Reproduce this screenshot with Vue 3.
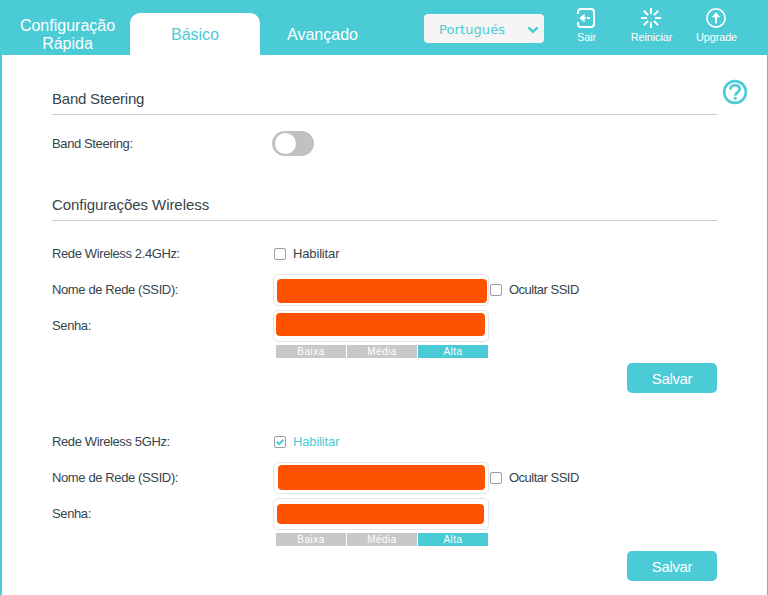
<script setup>
import { ref } from 'vue'

const language = ref('Portugués')
const bandSteering = ref(false)
const levels = ['Baixa', 'Média', 'Alta']
const networks = ref([
  { id: 'w24', label: 'Rede Wireless 2.4GHz:', enabled: false, hidden: false },
  { id: 'w5', label: 'Rede Wireless 5GHz:', enabled: true, hidden: false },
])
</script>

<template>
  <div class="page">
    <header class="header">
      <nav class="tabs">
        <a class="tab quick">Configuração<br />Rápida</a>
        <a class="tab active">Básico</a>
        <a class="tab">Avançado</a>
      </nav>
      <button class="language">
        <span>{{ language }}</span>
        <svg width="12" height="8" viewBox="0 0 12 8"><path d="M1.3 1.3 6 5.8l4.7-4.5" fill="none" stroke="#4acbd6" stroke-width="2.4" /></svg>
      </button>
      <div class="actions">
        <a class="action">
          <svg width="20" height="20" viewBox="0 0 20 20" fill="none" stroke="#fff" stroke-width="2">
            <path d="M2 6V4.2Q2 1 5 1h10q3 0 3 3v12q0 3-3 3H5q-3 0-3-3v-2" />
            <path d="M6 10h4M11 10h3" />
            <path d="M8.6 5.8 3.2 10l5.4 4.2z" fill="#fff" stroke="none" />
          </svg>
          <span>Sair</span>
        </a>
        <a class="action">
          <svg width="20" height="20" viewBox="0 0 20 20" fill="none" stroke="#fff" stroke-width="2">
            <path d="M10 0v6M10 14v6M0 10h6M14 10h6M2.8 2.8l4.3 4.3M12.9 12.9l4.3 4.3M17.2 2.8l-4.3 4.3M7.1 12.9l-4.3 4.3" />
          </svg>
          <span>Reiniciar</span>
        </a>
        <a class="action">
          <svg width="20" height="20" viewBox="0 0 20 20" fill="none" stroke="#fff">
            <circle cx="10" cy="10" r="9.1" stroke-width="1.6" />
            <path d="M10 8v7.5" stroke-width="2" />
            <path d="M10 4.3 14.3 9.3H5.7z" fill="#fff" stroke="none" />
          </svg>
          <span>Upgrade</span>
        </a>
      </div>
    </header>

    <main class="body">
      <div class="content">
        <h2>Band Steering</h2>
        <div class="row steering">
          <span class="label">Band Steering:</span>
          <button class="switch" :class="{ on: bandSteering }" @click="bandSteering = !bandSteering"><i></i></button>
        </div>

        <h2 class="second">Configurações Wireless</h2>
        <section v-for="net in networks" :key="net.id" class="network" :class="net.id">
          <div class="row">
            <span class="label">{{ net.label }}</span>
            <span class="check" :class="{ checked: net.enabled }" @click="net.enabled = !net.enabled">
              <i><svg v-if="net.enabled" width="10" height="10" viewBox="0 0 10 10"><path d="M1.7 4.8 4.2 7 8.4 2.7" fill="none" stroke="#4acbd6" stroke-width="2" /></svg></i>
              <span>Habilitar</span>
            </span>
          </div>
          <div class="row">
            <span class="label">Nome de Rede (SSID):</span>
            <div class="field ssid"><div class="mask"></div></div>
            <span class="check hide" @click="net.hidden = !net.hidden"><i></i><span>Ocultar SSID</span></span>
          </div>
          <div class="row">
            <span class="label">Senha:</span>
            <div class="field password"><div class="mask"></div></div>
          </div>
          <div class="strength">
            <span v-for="level in levels" :key="level" :class="{ current: level === 'Alta' }">{{ level }}</span>
          </div>
          <button class="save">Salvar</button>
        </section>
      </div>
      <button class="help">
        <svg width="26" height="26" viewBox="0 0 26 26" fill="none" stroke="#4acbd6">
          <circle cx="13" cy="13" r="10.9" stroke-width="2.6" />
          <path d="M8.4 10.8C8.4 7.7 10.2 6.3 13 6.3s4.7 1.5 4.7 4c0 3.1-4.5 3.1-4.5 6.4" stroke-width="2.6" />
          <path d="M11.8 18h2.8v2.6h-2.8z" fill="#4acbd6" stroke="none" />
        </svg>
      </button>
    </main>
  </div>
</template>

<style>
body { margin: 0; background: #fff; overflow: hidden; }
</style>

<style scoped>
* { box-sizing: border-box; }
button { border: 0; padding: 0; margin: 0; font-family: inherit; }
svg { display: block; }
.page { width: 768px; height: 595px; display: flex; flex-direction: column; font-family: "Liberation Sans", Arial, sans-serif; font-size: 13px; color: #36444b; }
.header { height: 55px; flex: none; background: #4acbd6; display: flex; align-items: flex-start; color: #fff; }
.tabs { display: flex; padding: 13px 0 0 5px; }
.tab { width: 125px; height: 42px; display: flex; align-items: center; justify-content: center; text-align: center; font-size: 16px; line-height: 18px; }
.tab.quick { padding-top: 1px; }
.tab.active { width: 130px; background: #fff; color: #4acbd6; border-radius: 10px 10px 0 0; }
.tab + .tab { padding-top: 1px; }
.language { width: 120px; height: 29px; margin: 14px 0 0 39px; padding: 2px 5px 0 15px; display: flex; align-items: center; justify-content: space-between; background: #f5f5f5; border-radius: 4px; color: #4acbd6; font: 13px "DejaVu Sans", Verdana, sans-serif; letter-spacing: 0.1px; }
.actions { display: flex; padding: 8px 0 0 9px; }
.action { width: 65px; display: flex; flex-direction: column; align-items: center; gap: 2px; font-size: 11px; line-height: 14px; letter-spacing: -0.15px; }
.action svg { margin-left: 1px; }
.action span { margin-left: 2px; }
.body { flex: 1; display: flex; align-items: flex-start; border-left: 2px solid #4acbd6; border-right: 1px solid #4acbd6; padding-left: 50px; }
.content { width: 665px; }
h2 { margin: 0; height: 60px; padding-top: 35px; border-bottom: 1px solid #c8c9cb; font-size: 15px; line-height: 18px; font-weight: 400; letter-spacing: -0.22px; }
h2.second { height: 48px; padding-top: 23px; margin-bottom: 15px; letter-spacing: -0.06px; }
.row { height: 36px; display: flex; align-items: center; }
.row.steering { height: 58px; padding-bottom: 1px; }
.label { width: 221px; flex: none; padding-bottom: 2px; letter-spacing: -0.38px; }
.steering .label { padding-bottom: 1px; }
.switch { width: 42px; height: 25px; margin-left: -1px; border-radius: 13px; background: #c0c1c4; padding: 2px 3px; display: flex; }
.switch i { width: 21px; height: 21px; border-radius: 50%; background: #fff; }
.switch.on { background: #4acbd6; justify-content: flex-end; }
.check { display: flex; align-items: center; gap: 7px; margin-left: 1px; letter-spacing: -0.15px; }
.check span { padding-bottom: 2px; }
.check.hide { letter-spacing: -0.5px; }
.check i { width: 12px; height: 12px; border: 1px solid #9b9ba3; border-radius: 2px; background: #fff; display: flex; }
.check.checked { color: #4acbd6; }
.field { width: 216px; height: 32px; border: 1px solid #e4e3ea; border-radius: 5px; display: flex; align-items: flex-start; }
.mask { background: #ff5200; border-radius: 4px; }
.ssid .mask { width: 210px; height: 24px; margin: 4px 0 0 3px; }
.password .mask { width: 209px; height: 23px; margin: 2px 0 0 2px; }
.w5 .ssid .mask { width: 207px; height: 25px; margin: 2px 0 0 4px; }
.w5 .password .mask { width: 207px; height: 20px; margin: 5px 0 0 3px; }
.network { height: 188px; display: flex; flex-direction: column; }
.strength { display: flex; gap: 1px; margin: 1px 0 0 224px; }
.strength span { width: 70px; height: 13px; background: #c8c8c8; color: #fff; font-size: 10px; line-height: 14px; letter-spacing: 0.5px; text-align: center; }
.strength .current { background: #4acbd6; }
.save { width: 90px; height: 30px; margin: 5px 0 0 auto; padding-top: 1px; border-radius: 5px; background: #4acbd6; color: #fff; font-size: 15px; line-height: 29px; letter-spacing: -0.35px; }
.help { margin: 24px 0 0 5px; background: none; }
</style>
